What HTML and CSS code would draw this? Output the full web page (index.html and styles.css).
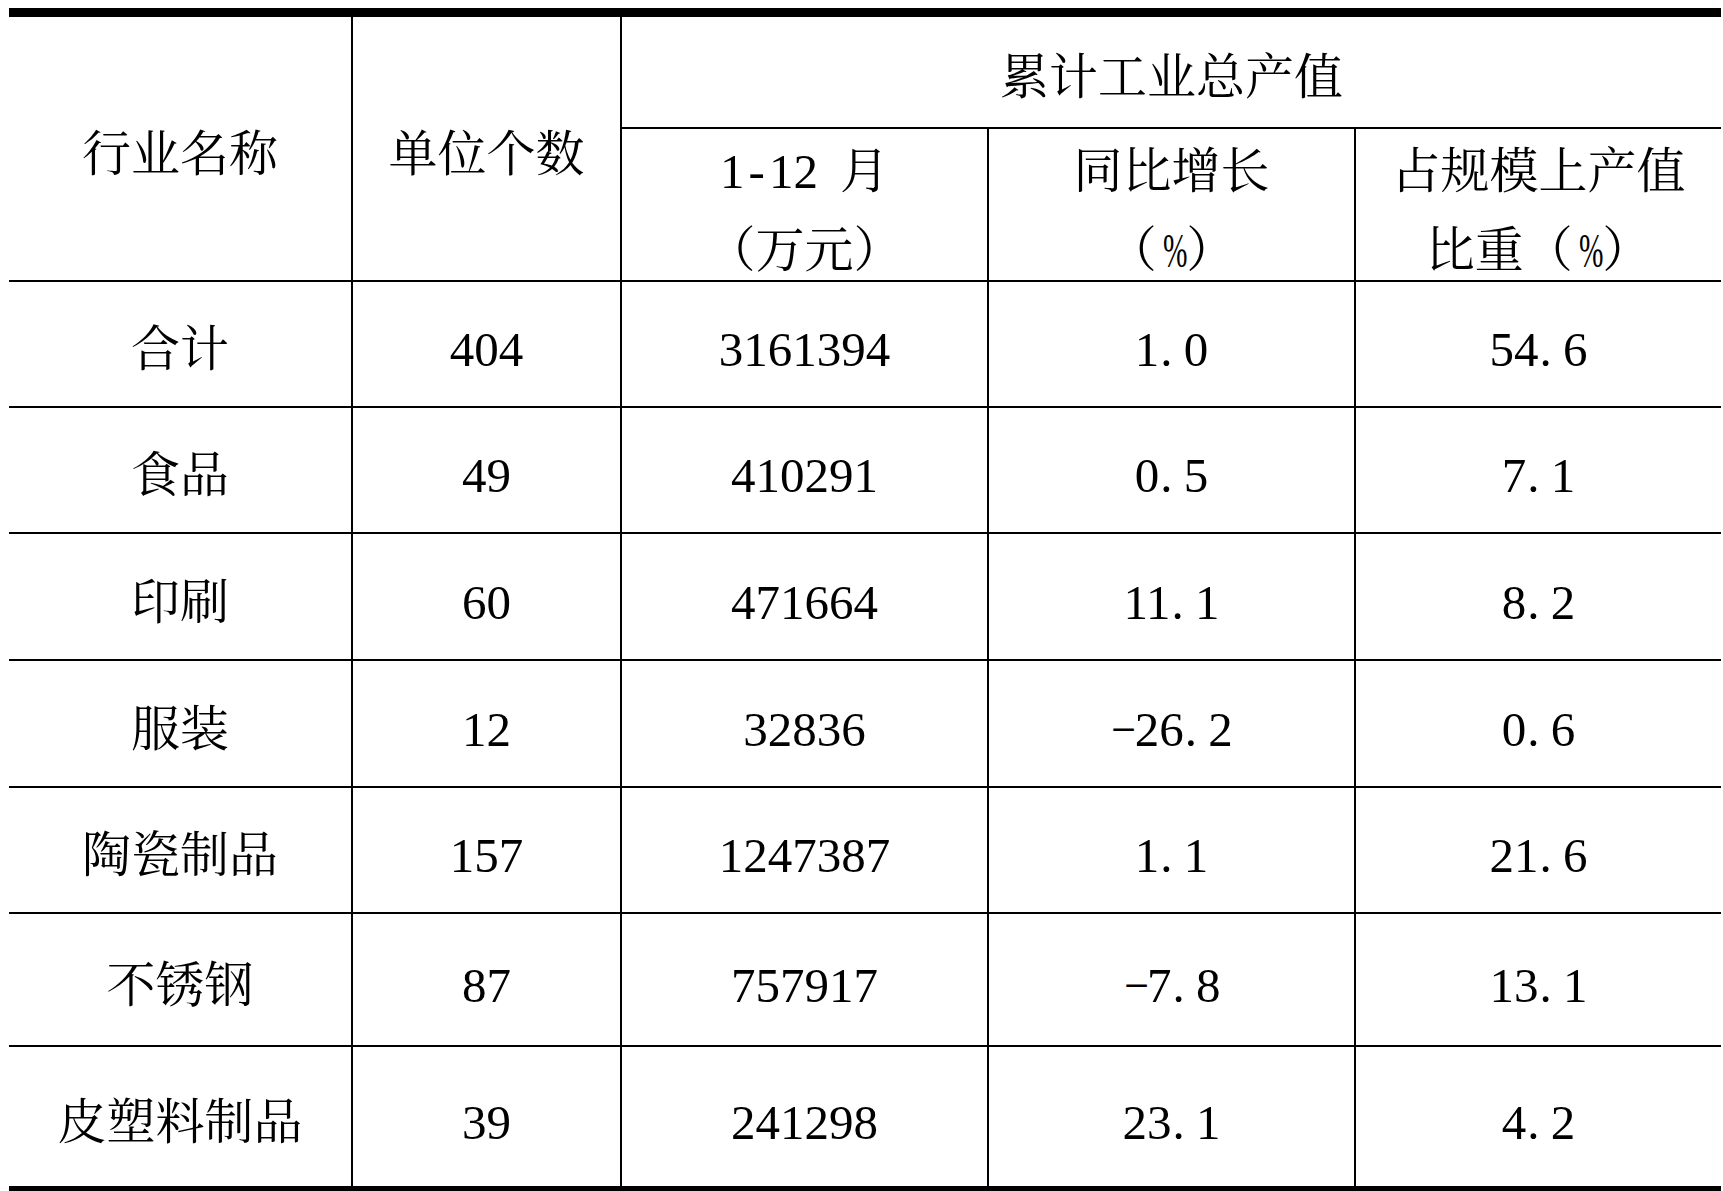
FILE: index.html
```html
<!DOCTYPE html>
<html lang="zh-CN">
<head>
<meta charset="utf-8">
<title>累计工业总产值</title>
<link rel="stylesheet" href="styles.css">
</head>
<body>
<table class="stats">
  <colgroup>
    <col class="c1"><col class="c2"><col class="c3"><col class="c4"><col class="c5">
  </colgroup>
  <tbody>
    <tr class="h1">
      <td rowspan="2">行业名称</td>
      <td rowspan="2">单位个数</td>
      <td colspan="3" class="last">累计工业总产值</td>
    </tr>
    <tr class="h2">
      <td class="two"><span class="ln">1<span class="hw">-</span>12<span class="sp"> </span>月</span><span class="ln ln2">（万元）</span></td>
      <td class="two"><span class="ln">同比增长</span><span class="ln ln2">（<span class="pct">%</span>）</span></td>
      <td class="two last"><span class="ln">占规模上产值</span><span class="ln ln2">比重（<span class="pct">%</span>）</span></td>
    </tr>
    <tr class="r126">
      <td>合计</td><td>404</td><td>3161394</td><td>1<span class="dot">.</span>0</td><td class="last">54<span class="dot">.</span>6</td>
    </tr>
    <tr class="r126">
      <td>食品</td><td>49</td><td>410291</td><td>0<span class="dot">.</span>5</td><td class="last">7<span class="dot">.</span>1</td>
    </tr>
    <tr class="r127">
      <td>印刷</td><td>60</td><td>471664</td><td>11<span class="dot">.</span>1</td><td class="last">8<span class="dot">.</span>2</td>
    </tr>
    <tr class="r127">
      <td>服装</td><td>12</td><td>32836</td><td><span class="minus">−</span>26<span class="dot">.</span>2</td><td class="last">0<span class="dot">.</span>6</td>
    </tr>
    <tr class="r126">
      <td>陶瓷制品</td><td>157</td><td>1247387</td><td>1<span class="dot">.</span>1</td><td class="last">21<span class="dot">.</span>6</td>
    </tr>
    <tr class="r133">
      <td>不锈钢</td><td>87</td><td>757917</td><td><span class="minus">−</span>7<span class="dot">.</span>8</td><td class="last">13<span class="dot">.</span>1</td>
    </tr>
    <tr class="r139 end">
      <td>皮塑料制品</td><td>39</td><td>241298</td><td>23<span class="dot">.</span>1</td><td class="last">4<span class="dot">.</span>2</td>
    </tr>
  </tbody>
</table>
</body>
</html>
```

FILE: styles.css
```css
html, body {
  margin: 0;
  padding: 0;
  background: #ffffff;
}

.stats {
  margin: 8px 0 0 9px;
  width: 1712px;
  table-layout: fixed;
  border-collapse: separate;
  border-spacing: 0;
  border-top: 9px solid #000;
  border-bottom: 9px solid #000;
  font-family: "Liberation Serif", "Noto Serif CJK SC", "Noto Sans CJK SC", serif;
  font-size: 49px;
  line-height: 70px;
  color: #000;
}

.c1 { width: 344px; }
.c2 { width: 269px; }
.c3 { width: 367px; }
.c4 { width: 367px; }
.c5 { width: 365px; }

.stats td {
  box-sizing: border-box;
  padding: 12px 0 0 0;
  text-align: center;
  vertical-align: middle;
  border-right: 2px solid #000;
  border-bottom: 2px solid #000;
  white-space: nowrap;
}

.stats td.two {
  padding: 3px 0 0 0;
  vertical-align: top;
}

.ln {
  display: block;
  height: 73px;
  line-height: 80px;
  overflow: visible;
}

.ln2 {
  line-height: 91px;
}

.stats td.last {
  border-right: none;
}

.stats tr.end td {
  border-bottom: none;
}

.h1 { height: 112px; }
.h2 { height: 153px; }
.r126 { height: 126px; }
.r127 { height: 127px; }
.r133 { height: 133px; }
.r139 { height: 139px; }

.hw {
  display: inline-block;
  width: 0.5em;
  text-align: center;
}

.minus {
  display: inline-block;
  width: 0.5em;
  text-align: center;
  transform: scaleX(0.9);
}

.sp {
  display: inline-block;
  width: 0.45em;
}

.dot {
  display: inline-block;
  width: 0.5em;
  text-align: left;
  text-indent: 0.02em;
}

.pct {
  display: inline-block;
  width: 0.6em;
  transform: scaleX(0.6);
  text-align: center;
}
```
